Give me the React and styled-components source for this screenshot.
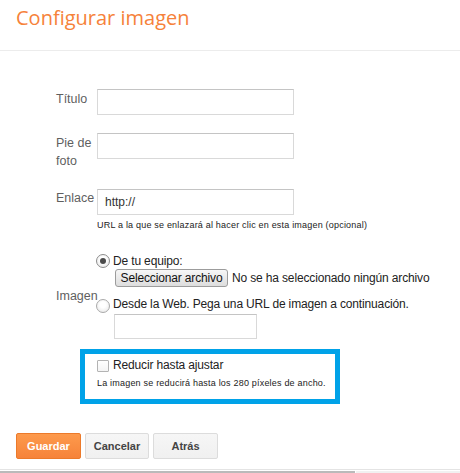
import React from "react";
import styled, { createGlobalStyle } from "styled-components";

const GlobalStyle = createGlobalStyle`
  html, body { margin: 0; padding: 0; background: #fff; }
  body { font-family: "Liberation Sans", Arial, sans-serif; }
  * { box-sizing: border-box; }
`;

const Page = styled.div`
  width: 460px;
  height: 473px;
  display: flex;
  flex-direction: column;
  overflow: hidden;
  background: #fff;
`;

const Header = styled.header`
  height: 51px;
  padding: 6px 16px 0;
  border-bottom: 1px solid #ececec;
`;

const Title = styled.h1`
  margin: 0;
  font-family: "Open Sans", "Liberation Sans", sans-serif;
  font-weight: 400;
  font-size: 20px;
  line-height: 24px;
  color: #f6823a;
`;

const Form = styled.div`
  padding: 38px 0 0 56px;
  display: flex;
  flex-direction: column;
`;

const Row = styled.div`
  display: flex;
  align-items: ${(p) => (p.$center ? "center" : "flex-start")};
  margin-top: ${(p) => p.$top || 0}px;
`;

const Label = styled.div`
  width: 41px;
  flex: none;
  font-size: 12.5px;
  line-height: 18px;
  color: #5f5f5f;
  white-space: nowrap;
  margin-top: ${(p) => p.$shift ?? 1}px;
`;

const Field = styled.div`
  display: flex;
  flex-direction: column;
  align-items: flex-start;
`;

const TextInput = styled.div`
  width: ${(p) => p.$w || 197}px;
  height: ${(p) => p.$h || 26}px;
  border: 1px solid #d9d9d9;
  border-top-color: #c4c4c4;
  background: #fff;
  padding-left: 7px;
  font-size: 12px;
  line-height: 24px;
  color: #333;
  margin-left: ${(p) => p.$indent || 0}px;
  margin-top: ${(p) => p.$top || 0}px;
`;

const Help = styled.div`
  margin-top: ${(p) => p.$top || 0}px;
  font-size: 9px;
  line-height: 12px;
  letter-spacing: 0.2px;
  color: #222;
  white-space: nowrap;
`;

const OptionLine = styled.div`
  display: flex;
  align-items: center;
  height: 16px;
  margin-top: ${(p) => p.$top || 0}px;
  font-size: 12px;
  letter-spacing: -0.15px;
  color: #222;
  white-space: nowrap;
`;

const Radio = styled.span`
  width: 14px;
  height: 14px;
  margin: ${(p) => (p.$checked ? "0" : "3px")} 3px 0 -1px;
  border-radius: 50%;
  border: 1px solid ${(p) => (p.$checked ? "#8c8c8c" : "#a9a9a9")};
  background: radial-gradient(circle at 50% 40%, #ffffff 30%, #e3e3e3 100%);
  display: flex;
  align-items: center;
  justify-content: center;
  flex: none;
  &::after {
    content: "";
    display: ${(p) => (p.$checked ? "block" : "none")};
    width: 6px;
    height: 6px;
    border-radius: 50%;
    background: #4a4a4a;
  }
`;

const FileLine = styled.div`
  display: flex;
  align-items: center;
  margin: 0 0 0 18px;
  font-size: 12px;
  letter-spacing: -0.15px;
  color: #222;
  white-space: nowrap;
`;

const FileButton = styled.span`
  height: 18px;
  width: 113px;
  display: inline-flex;
  align-items: center;
  justify-content: center;
  border: 1px solid #9c9c9c;
  border-radius: 3px;
  background: linear-gradient(#f7f7f7, #dddddd);
  color: #111;
  margin-right: 4px;
`;

const Highlight = styled.div`
  width: 260px;
  margin: 10px 0 0 24px;
  border: 5px solid #00a2e8;
  padding: 3px 0 10px 12px;
`;

const CheckLine = styled.div`
  display: flex;
  align-items: center;
  height: 16px;
  font-size: 12px;
  letter-spacing: -0.15px;
  color: #222;
`;

const Checkbox = styled.span`
  width: 12px;
  height: 12px;
  border: 1px solid #b3b3b3;
  border-radius: 1px;
  background: linear-gradient(#fff, #f4f4f4);
  margin: 2px 4px 0 0;
  flex: none;
`;

const Buttons = styled.div`
  display: flex;
  gap: 4px;
  padding: 29px 0 0 16px;
`;

const Button = styled.span`
  min-width: 64px;
  height: 26px;
  padding: 0 8px;
  display: inline-flex;
  align-items: center;
  justify-content: center;
  border-radius: 2px;
  font-size: 11px;
  font-weight: 700;
  border: 1px solid ${(p) => (p.$primary ? "#ec7a2a" : "#dcdcdc")};
  background: ${(p) =>
    p.$primary
      ? "linear-gradient(#fd9a4c, #f6833a)"
      : "linear-gradient(#f6f6f6, #f0f0f0)"};
  color: ${(p) => (p.$primary ? "#fff" : "#444")};
  width: ${(p) => p.$w}px;
`;

const Footer = styled.div`
  margin-top: auto;
  border-top: 1px solid #e4e4e4;
  height: 4px;
  padding-top: 1px;
  display: flex;
`;

const Thumb = styled.div`
  width: 355px;
  height: 3px;
  background: #bababa;
`;

const Track = styled.div`
  flex: 1;
  height: 3px;
  background: #f1f1f1;
  border-left: 1px solid #fff;
`;

export default function App() {
  return (
    <>
      <GlobalStyle />
      <Page>
        <Header>
          <Title>Configurar imagen</Title>
        </Header>
        <Form>
          <Row>
            <Label>Título</Label>
            <TextInput />
          </Row>
          <Row $top={18}>
            <Label>
              Pie de
              <br />
              foto
            </Label>
            <TextInput />
          </Row>
          <Row $top={19}>
            <Label $shift={0}>Enlace</Label>
            <Field>
              <TextInput>http://</TextInput>
              <Help $top={4}>URL a la que se enlazará al hacer clic en esta imagen (opcional)</Help>
            </Field>
          </Row>
          <Row $top={22} $center>
            <Label $shift={0}>Imagen</Label>
            <Field>
              <OptionLine>
                <Radio $checked />
                De tu equipo:
              </OptionLine>
              <FileLine>
                <FileButton>Seleccionar archivo</FileButton>
                No se ha seleccionado ningún archivo
              </FileLine>
              <OptionLine $top={9}>
                <Radio />
                Desde la Web. Pega una URL de imagen a continuación.
              </OptionLine>
              <TextInput $w={143} $h={25} $indent={17} $top={2} />
            </Field>
          </Row>
          <Highlight>
            <CheckLine>
              <Checkbox />
              Reducir hasta ajustar
            </CheckLine>
            <Help $top={4}>La imagen se reducirá hasta los 280 píxeles de ancho.</Help>
          </Highlight>
        </Form>
        <Buttons>
          <Button $primary $w={65}>Guardar</Button>
          <Button $w={64}>Cancelar</Button>
          <Button $w={65}>Atrás</Button>
        </Buttons>
        <Footer>
          <Thumb />
          <Track />
        </Footer>
      </Page>
    </>
  );
}
